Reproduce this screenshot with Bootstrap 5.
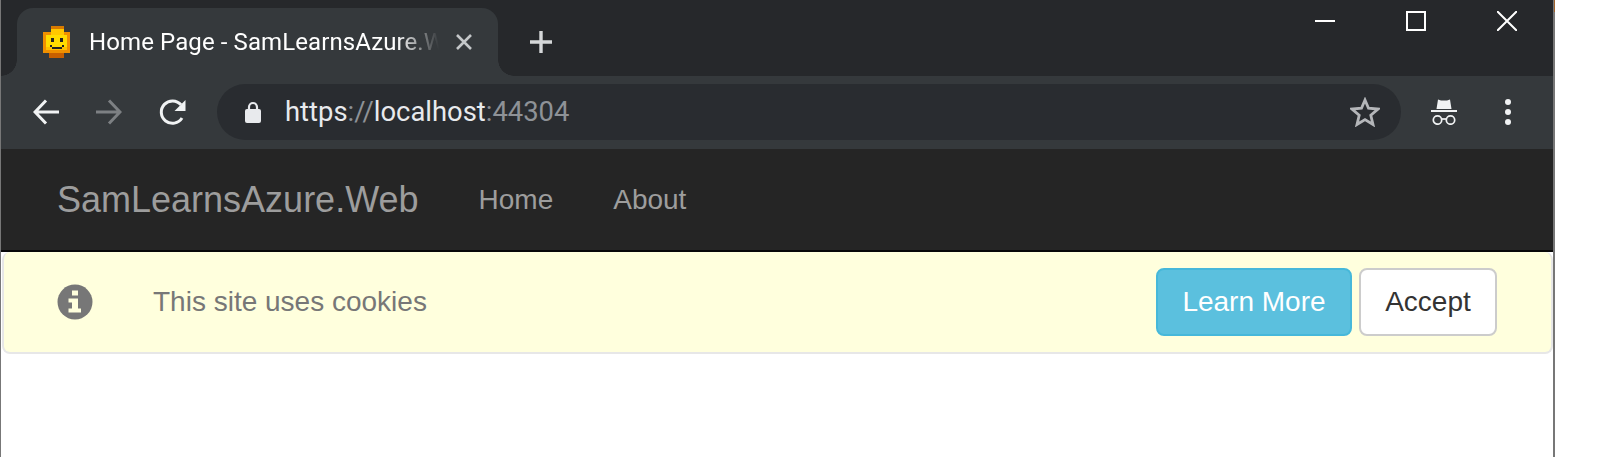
<!DOCTYPE html>
<html lang="en">
  <head>
    <meta charset="UTF-8" />
    <meta name="viewport" content="width=device-width, initial-scale=1" />
    <title>Home Page - SamLearnsAzure.Web</title>
    <link
      href="https://cdn.jsdelivr.net/npm/bootstrap@5.3.0/dist/css/bootstrap.min.css"
      rel="stylesheet"
    />
    <style>
      html, body { height: 457px; overflow: hidden; background: #fff; }
      .win-frame { position: relative; width: 1555px; height: 457px; border-left: 1px solid #777; border-right: 2px solid #777; background: #fff; font-family: "Liberation Sans", Arial, sans-serif; }
      .win-frame::after { content: ""; position: absolute; top: 0; right: -2px; width: 1px; height: 12px; background: #a0622c; }
      .tab-strip { height: 76px; background: #26282b; padding-left: 16px; }
      .chrome-tab { position: relative; width: 481px; margin-top: 8px; height: 68px; background: #35393c; border-radius: 16px 16px 0 0; padding: 0 26px 0 26px; color: #fff; }
      .chrome-tab::before, .chrome-tab::after { content: ""; position: absolute; bottom: 0; width: 16px; height: 16px; }
      .chrome-tab::before { left: -16px; background: radial-gradient(circle at 0 0, transparent 15.5px, #35393c 16px); }
      .chrome-tab::after { right: -16px; background: radial-gradient(circle at 100% 0, transparent 15.5px, #35393c 16px); }
      .tab-title { font-family: Roboto, sans-serif; font-size: 24px; letter-spacing: 0.1px; white-space: nowrap; overflow: hidden; width: 350px; margin-left: 19px; -webkit-mask-image: linear-gradient(to right, #000 88%, transparent 100%); mask-image: linear-gradient(to right, #000 88%, transparent 100%); }
      .tab-plus { margin: 7px 0 0 32px; }
      .win-btns { margin-left: auto; padding: 11px 36px 0 0; gap: 71px; }
      .tool-bar { height: 73px; background: #35393c; padding: 8px 0 0 32px; }
      .nav-icons { height: 56px; gap: 37px; }
      .addr-box { width: 1184px; height: 56px; border-radius: 28px; background: #292c30; margin-left: 31px; padding: 0 21px 0 28px; }
      .addr-url { font-family: Roboto, sans-serif; font-size: 27.4px; color: #e8eaed; margin-left: 24px; padding-top: 1px; }
      .addr-dim { color: #8e9297; }
      .tool-right { height: 56px; }
      .tool-spy { margin-left: 30px; }
      .tool-dots { margin-left: 48px; }
      .site-nav { height: 103px; background: #252525; border-bottom: 2px solid #080808; padding: 0 0 0 56px; }
      .site-brand { font-size: 36px; color: #9d9d9d; text-decoration: none; }
      .site-link { font-size: 28px; color: #9d9d9d; text-decoration: none; margin-left: 60px; }
      .cookie-bar { height: 102px; margin: 0 0 0 1px; width: 1551px; background: #ffd; border: 2px solid #e7e7e7; border-top: 0; border-radius: 8px; padding: 0 54px 0 53px; color: #777; font-size: 28px; }
      .cookie-text { margin-left: 60px; }
      .cookie-btns { gap: 7px; }
      .btn-learn, .btn-accept { height: 68px; font-size: 28px; border-width: 2px; border-radius: 8px; padding: 0 24px; }
      .btn-learn { background: #5bc0de; border-color: #46b8da; color: #fff; width: 196px; }
      .btn-accept { background: #fff; border-color: #ccc; color: #333; width: 138px; }
    </style>
  </head>
  <body>
    <div class="win-frame">
      <div class="tab-strip d-flex">
        <div class="chrome-tab d-flex align-items-center">
          <svg width="27" height="32" viewBox="0 0 27 32" shape-rendering="crispEdges" class="flex-shrink-0">
            <rect x="8" y="0" width="13" height="6" fill="#d97a00" />
            <rect x="0" y="6" width="27" height="21" fill="#f09000" />
            <rect x="8" y="3" width="13" height="6" fill="#ffc800" />
            <rect x="3" y="9" width="21" height="15" fill="#ffdc00" />
            <rect x="3" y="21" width="21" height="3" fill="#ffc000" />
            <rect x="6" y="27" width="15" height="5" fill="#c85f00" />
            <rect x="8" y="12" width="3" height="4" fill="#222" />
            <rect x="17" y="12" width="3" height="4" fill="#222" />
            <rect x="9" y="21" width="10" height="2" fill="#222" />
            <rect x="7" y="19" width="2" height="2" fill="#222" />
            <rect x="19" y="19" width="2" height="2" fill="#222" />
          </svg>
          <span class="tab-title">Home Page - SamLearnsAzure.Web</span>
          <svg width="16" height="16" viewBox="0 0 16 16" class="ms-auto" stroke="#c4c7c9" stroke-width="2.6">
            <path d="M1 1 15 15M15 1 1 15" />
          </svg>
        </div>
        <svg width="22" height="22" viewBox="0 0 22 22" class="tab-plus align-self-center" stroke="#d5d7d9" stroke-width="3.4">
          <path d="M11 0V22M0 11H22" />
        </svg>
        <div class="win-btns d-flex align-items-start">
          <svg width="20" height="20" viewBox="0 0 20 20" stroke="#fff" stroke-width="2"><path d="M0 10H20" /></svg>
          <svg width="20" height="20" viewBox="0 0 20 20" fill="none" stroke="#fff" stroke-width="2"><rect x="1" y="1" width="18" height="18" /></svg>
          <svg width="20" height="20" viewBox="0 0 20 20" stroke="#fff" stroke-width="2"><path d="M0 0 20 20M20 0 0 20" /></svg>
        </div>
      </div>
      <div class="tool-bar d-flex align-items-start">
        <div class="nav-icons d-flex align-items-center">
          <svg width="26" height="26" viewBox="0 0 26 26" fill="none" stroke="#f1f3f4" stroke-width="3"><path d="M26 13H3M13 1.5 2 13 13 24.5" /></svg>
          <svg width="26" height="26" viewBox="0 0 26 26" fill="none" stroke="#7d8083" stroke-width="3"><path d="M0 13H23M13 1.5 24 13 13 24.5" /></svg>
          <svg width="27" height="27" viewBox="0 0 27 27" fill="none" stroke="#f1f3f4" stroke-width="3"><path d="M23 19A11.2 11.2 0 1 1 22 5.8" /><path d="M26.5 1V12H15.5Z" fill="#f1f3f4" stroke="none" /></svg>
        </div>
        <div class="addr-box d-flex align-items-center">
          <svg width="16" height="22" viewBox="0 0 16 22"><path d="M4 9V6a4 4 0 0 1 8 0V9" fill="none" stroke="#e8eaed" stroke-width="2.2" /><rect y="8" width="16" height="14" rx="2" fill="#e8eaed" /></svg>
          <span class="addr-url">https<span class="addr-dim">://</span>localhost<span class="addr-dim">:44304</span></span>
          <svg width="30" height="30" viewBox="0 0 30 30" class="ms-auto" fill="none" stroke="#b4b6b9" stroke-width="2.8"><path d="M15 3 18.5 11.2 28 12 20.8 18.2 23 27.5 15 22.6 7 27.5 9.2 18.2 2 12 11.5 11.2Z" /></svg>
        </div>
        <div class="tool-right d-flex align-items-center">
          <svg width="26" height="26" viewBox="0 0 26 26" class="tool-spy">
            <path d="M7 0.5 10 1.5H16L19 0.5 20.5 10H5.5Z" fill="#f1f3f4" />
            <rect y="11" width="26" height="2" fill="#f1f3f4" />
            <circle cx="6.5" cy="21" r="4.2" fill="none" stroke="#f1f3f4" stroke-width="1.7" />
            <circle cx="19.5" cy="21" r="4.2" fill="none" stroke="#f1f3f4" stroke-width="1.7" />
            <path d="M10.5 20H15.5" stroke="#f1f3f4" stroke-width="1.7" />
          </svg>
          <svg width="6" height="26" viewBox="0 0 6 26" fill="#f1f3f4" class="tool-dots">
            <circle cx="3" cy="3" r="3" /><circle cx="3" cy="13" r="3" /><circle cx="3" cy="23" r="3" />
          </svg>
        </div>
      </div>
      <nav class="site-nav d-flex align-items-center">
        <a class="site-brand" href="#">SamLearnsAzure.Web</a>
        <a class="site-link" href="#">Home</a>
        <a class="site-link" href="#">About</a>
      </nav>
      <div class="cookie-bar d-flex align-items-center">
        <svg width="36" height="36" viewBox="0 0 36 36" class="flex-shrink-0">
          <circle cx="18" cy="18" r="17.5" fill="#777" />
          <rect x="15" y="6.5" width="6" height="5" fill="#ffd" />
          <path d="M11.5 14.5H21V24.5H24V28.5H11.5V24.5H15V18.5H11.5Z" fill="#ffd" />
        </svg>
        <span class="cookie-text">This site uses cookies</span>
        <div class="cookie-btns ms-auto d-flex">
          <button type="button" class="btn btn-learn">Learn More</button>
          <button type="button" class="btn btn-accept">Accept</button>
        </div>
      </div>
    </div>
  </body>
</html>
